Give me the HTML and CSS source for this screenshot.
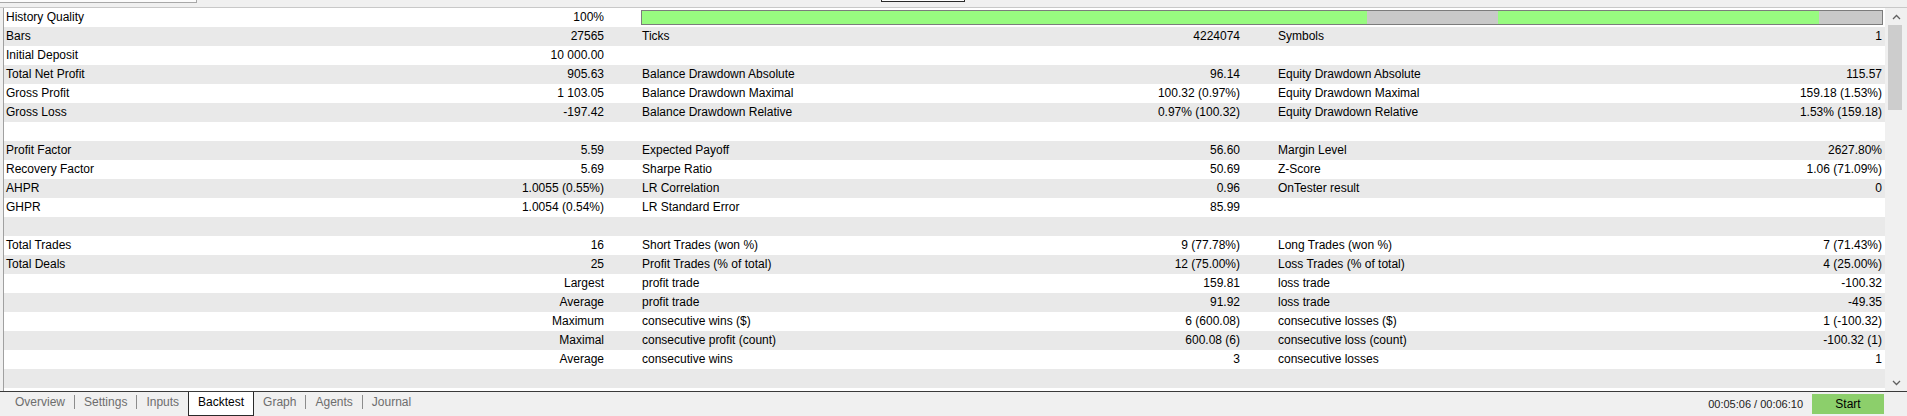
FILE: index.html
```html
<!DOCTYPE html>
<html>
<head>
<meta charset="utf-8">
<link rel="stylesheet" href="styles.css">
</head>
<body>
<div class="topstrip">
  <div class="tbox-a"></div>
  <div class="tspace-1"></div>
  <div class="tbox-b"></div>
</div>
<div class="main">
  <div class="table">
    <div class="row">
      <div class="cell"><span>History Quality</span><span>100%</span></div>
      <div class="qbar">
        <div class="seg green" style="width:58.5%"></div>
        <div class="seg gray" style="width:10.5%"></div>
        <div class="seg green" style="width:25.95%"></div>
        <div class="seg gray" style="width:5.05%"></div>
      </div>
    </div>
    <div class="row">
      <div class="cell"><span>Bars</span><span>27565</span></div>
      <div class="cell"><span>Ticks</span><span>4224074</span></div>
      <div class="cell"><span>Symbols</span><span>1</span></div>
    </div>
    <div class="row">
      <div class="cell"><span>Initial Deposit</span><span>10 000.00</span></div>
      <div class="cell"></div>
      <div class="cell"></div>
    </div>
    <div class="row">
      <div class="cell"><span>Total Net Profit</span><span>905.63</span></div>
      <div class="cell"><span>Balance Drawdown Absolute</span><span>96.14</span></div>
      <div class="cell"><span>Equity Drawdown Absolute</span><span>115.57</span></div>
    </div>
    <div class="row">
      <div class="cell"><span>Gross Profit</span><span>1 103.05</span></div>
      <div class="cell"><span>Balance Drawdown Maximal</span><span>100.32 (0.97%)</span></div>
      <div class="cell"><span>Equity Drawdown Maximal</span><span>159.18 (1.53%)</span></div>
    </div>
    <div class="row">
      <div class="cell"><span>Gross Loss</span><span>-197.42</span></div>
      <div class="cell"><span>Balance Drawdown Relative</span><span>0.97% (100.32)</span></div>
      <div class="cell"><span>Equity Drawdown Relative</span><span>1.53% (159.18)</span></div>
    </div>
    <div class="row"></div>
    <div class="row">
      <div class="cell"><span>Profit Factor</span><span>5.59</span></div>
      <div class="cell"><span>Expected Payoff</span><span>56.60</span></div>
      <div class="cell"><span>Margin Level</span><span>2627.80%</span></div>
    </div>
    <div class="row">
      <div class="cell"><span>Recovery Factor</span><span>5.69</span></div>
      <div class="cell"><span>Sharpe Ratio</span><span>50.69</span></div>
      <div class="cell"><span>Z-Score</span><span>1.06 (71.09%)</span></div>
    </div>
    <div class="row">
      <div class="cell"><span>AHPR</span><span>1.0055 (0.55%)</span></div>
      <div class="cell"><span>LR Correlation</span><span>0.96</span></div>
      <div class="cell"><span>OnTester result</span><span>0</span></div>
    </div>
    <div class="row">
      <div class="cell"><span>GHPR</span><span>1.0054 (0.54%)</span></div>
      <div class="cell"><span>LR Standard Error</span><span>85.99</span></div>
      <div class="cell"></div>
    </div>
    <div class="row"></div>
    <div class="row">
      <div class="cell"><span>Total Trades</span><span>16</span></div>
      <div class="cell"><span>Short Trades (won %)</span><span>9 (77.78%)</span></div>
      <div class="cell"><span>Long Trades (won %)</span><span>7 (71.43%)</span></div>
    </div>
    <div class="row">
      <div class="cell"><span>Total Deals</span><span>25</span></div>
      <div class="cell"><span>Profit Trades (% of total)</span><span>12 (75.00%)</span></div>
      <div class="cell"><span>Loss Trades (% of total)</span><span>4 (25.00%)</span></div>
    </div>
    <div class="row">
      <div class="cell"><span></span><span>Largest</span></div>
      <div class="cell"><span>profit trade</span><span>159.81</span></div>
      <div class="cell"><span>loss trade</span><span>-100.32</span></div>
    </div>
    <div class="row">
      <div class="cell"><span></span><span>Average</span></div>
      <div class="cell"><span>profit trade</span><span>91.92</span></div>
      <div class="cell"><span>loss trade</span><span>-49.35</span></div>
    </div>
    <div class="row">
      <div class="cell"><span></span><span>Maximum</span></div>
      <div class="cell"><span>consecutive wins ($)</span><span>6 (600.08)</span></div>
      <div class="cell"><span>consecutive losses ($)</span><span>1 (-100.32)</span></div>
    </div>
    <div class="row">
      <div class="cell"><span></span><span>Maximal</span></div>
      <div class="cell"><span>consecutive profit (count)</span><span>600.08 (6)</span></div>
      <div class="cell"><span>consecutive loss (count)</span><span>-100.32 (1)</span></div>
    </div>
    <div class="row">
      <div class="cell"><span></span><span>Average</span></div>
      <div class="cell"><span>consecutive wins</span><span>3</span></div>
      <div class="cell"><span>consecutive losses</span><span>1</span></div>
    </div>
    <div class="row"></div>
  </div>
  <div class="scrollbar">
    <div class="sb-btn"><svg width="9" height="6" viewBox="0 0 9 6"><path d="M1 5 L4.5 1.5 L8 5" fill="none" stroke="#606060" stroke-width="1.3"/></svg></div>
    <div class="sb-track"><div class="sb-thumb"></div></div>
    <div class="sb-btn"><svg width="9" height="6" viewBox="0 0 9 6"><path d="M1 1 L4.5 4.5 L8 1" fill="none" stroke="#606060" stroke-width="1.3"/></svg></div>
  </div>
</div>
<div class="tabbar">
  <div class="tabs">
    <span class="tab">Overview</span><span class="sep"></span>
    <span class="tab">Settings</span><span class="sep"></span>
    <span class="tab">Inputs</span>
    <span class="tab active">Backtest</span>
    <span class="tab">Graph</span><span class="sep"></span>
    <span class="tab">Agents</span><span class="sep"></span>
    <span class="tab">Journal</span>
  </div>
  <div class="status">
    <span class="time">00:05:06 / 00:06:10</span>
    <span class="start">Start</span>
  </div>
</div>
</body>
</html>
```
FILE: styles.css
```css
html, body {
  margin: 0;
  padding: 0;
}
body {
  width: 1907px;
  height: 416px;
  overflow: hidden;
  background: #f0f0f0;
  font-family: "Liberation Sans", Arial, sans-serif;
  font-size: 12px;
  color: #000;
}
.topstrip {
  height: 7px;
  display: flex;
  align-items: flex-start;
  border-bottom: 1px solid #c8c8c8;
  box-sizing: content-box;
}
.tbox-a {
  width: 196px;
  height: 2px;
  background: #fbfbfb;
  border-bottom: 1px solid #a8a8a8;
  border-right: 1px solid #a8a8a8;
}
.tspace-1 {
  width: 684px;
}
.tbox-b {
  width: 82px;
  height: 1px;
  background: #fdfdfd;
  border: 1px solid #2a2a2a;
  border-top: none;
}
.main {
  display: flex;
  height: 383px;
}
.table {
  flex: 1;
  margin-left: 3px;
  border-left: 1px solid #a0a0a0;
  background: #fff;
  overflow: hidden;
}
.row {
  height: 19px;
  display: grid;
  grid-template-columns: 598px 598px 1fr;
  column-gap: 38px;
  padding: 0 3px 0 2px;
  align-items: center;
  line-height: 19px;
}
.row:nth-child(even) {
  background: #e9e9e9;
}
.cell {
  display: flex;
  justify-content: space-between;
  white-space: nowrap;
}
.qbar {
  grid-column: 2 / 4;
  margin: 0 -1px 0 -1px;
  height: 13px;
  border: 1px solid #7c7c7c;
  display: flex;
}
.seg {
  height: 100%;
}
.seg.green {
  background: #98fb80;
}
.seg.gray {
  background: #c9c9c9;
}
.scrollbar {
  width: 22px;
  display: flex;
  flex-direction: column;
  background: #f0f0f0;
}
.sb-btn {
  height: 17px;
  display: flex;
  align-items: center;
  justify-content: center;
}
.sb-track {
  flex: 1;
  padding: 0 5px 0 3px;
}
.sb-thumb {
  height: 85px;
  background: #cdcdcd;
}
.tabbar {
  height: 24px;
  border-top: 1px solid #3a3a3a;
  display: flex;
  justify-content: space-between;
  align-items: flex-start;
}
.tabs {
  display: flex;
  align-items: flex-start;
  padding-left: 6px;
  height: 24px;
}
.tab {
  padding: 3px 9px 0 9px;
  height: 21px;
  line-height: 15px;
  color: #6d6d6d;
}
.tab.active {
  color: #000;
  background: #fff;
  border: 1px solid #2a2a2a;
  border-top: none;
  height: 20px;
}
.sep {
  width: 1px;
  height: 14px;
  margin-top: 3px;
  background: #8c8c8c;
}
.status {
  display: flex;
  align-items: center;
  height: 24px;
  padding-right: 23px;
}
.time {
  color: #222;
  font-size: 11px;
  margin-right: 9px;
}
.start {
  width: 72px;
  height: 20px;
  line-height: 20px;
  text-align: center;
  background: #8ccf6b;
  color: #000;
}
```
